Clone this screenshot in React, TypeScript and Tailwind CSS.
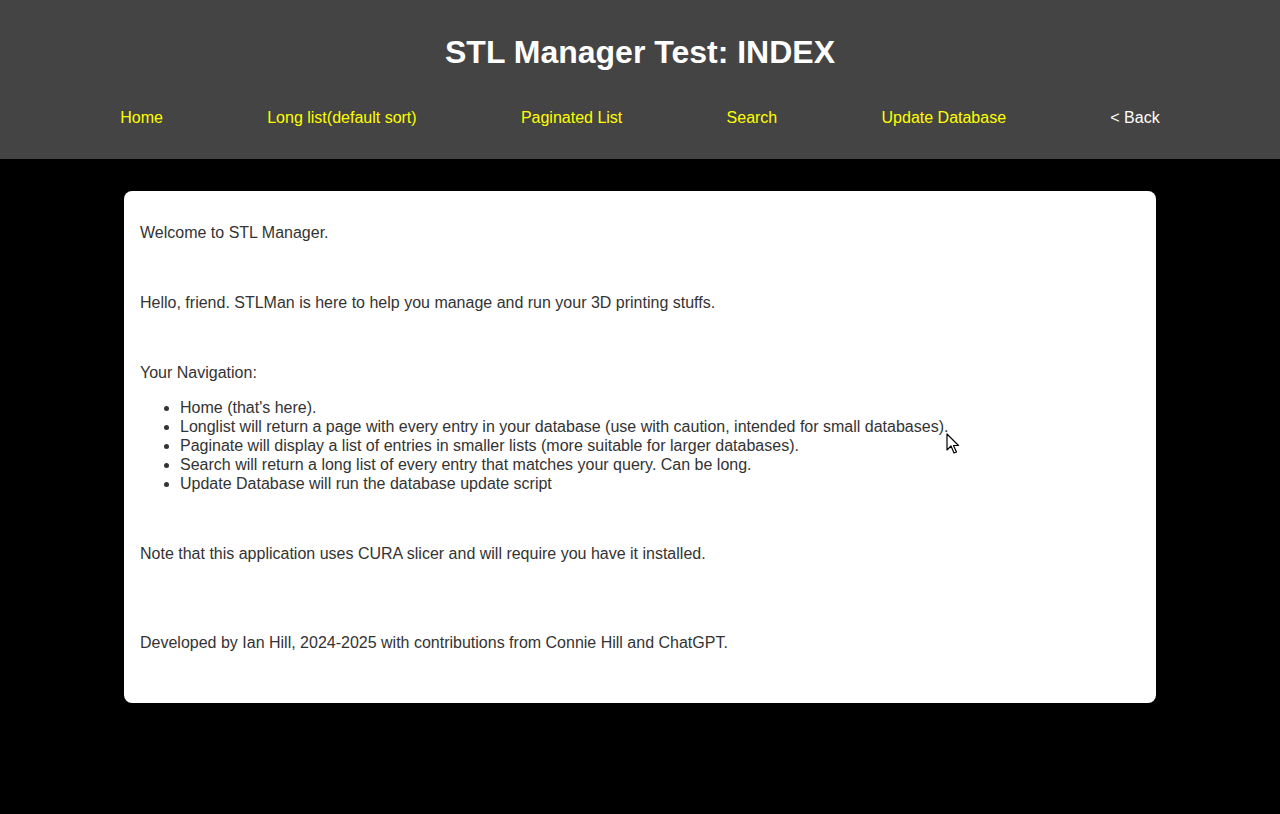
import React from 'react';

const navLinks = [
  { label: 'Home', color: 'text-[#ffff00]' },
  { label: 'Long list(default sort)', color: 'text-[#ffff00]' },
  { label: 'Paginated List', color: 'text-[#ffff00]' },
  { label: 'Search', color: 'text-[#ffff00]' },
  { label: 'Update Database', color: 'text-[#ffff00]' },
  { label: '< Back', color: 'text-white' },
];

const navItems = [
  "Home (that's here).",
  'Longlist will return a page with every entry in your database (use with caution, intended for small databases).',
  'Paginate will display a list of entries in smaller lists (more suitable for larger databases).',
  'Search will return a long list of every entry that matches your query. Can be long.',
  'Update Database will run the database update script',
];

export default function App() {
  return (
    <div className="relative min-h-[814px] bg-black font-['Liberation_Sans',Arial,sans-serif] text-[16px] leading-[19px]">
      <header className="bg-[#444444] pt-[34px] pb-[32px]">
        <h1 className="text-center text-[32px] leading-[37px] font-bold text-white">STL Manager Test: INDEX</h1>
        <nav className="mt-[37px] flex justify-evenly px-4">
          {navLinks.map((link) => (
            <a key={link.label} href="#" className={link.color}>
              {link.label}
            </a>
          ))}
        </nav>
      </header>

      <main className="mx-auto mt-8 w-[1032px] rounded-lg bg-white px-4 pt-8 pb-[51px] text-[#333333]">
        <p>Welcome to STL Manager.</p>
        <p className="mt-[51px]">Hello, friend. STLMan is here to help you manage and run your 3D printing stuffs.</p>
        <p className="mt-[51px]">Your Navigation:</p>
        <ul className="mt-4 list-disc pl-10">
          {navItems.map((item) => (
            <li key={item}>{item}</li>
          ))}
        </ul>
        <p className="mt-[51px]">Note that this application uses CURA slicer and will require you have it installed.</p>
        <p className="mt-[70px]">Developed by Ian Hill, 2024-2025 with contributions from Connie Hill and ChatGPT.</p>
      </main>

      {/* mouse pointer left in the capture */}
      <svg className="absolute left-[946px] top-[433px]" width="14" height="22" viewBox="0 0 14 22">
        <path d="M1 1 L1 17 L5 13 L8 20 L10.5 19 L7.5 12.5 L12.5 12.5 Z" fill="white" stroke="black" strokeWidth="1.2" strokeLinejoin="round" />
      </svg>
    </div>
  );
}
